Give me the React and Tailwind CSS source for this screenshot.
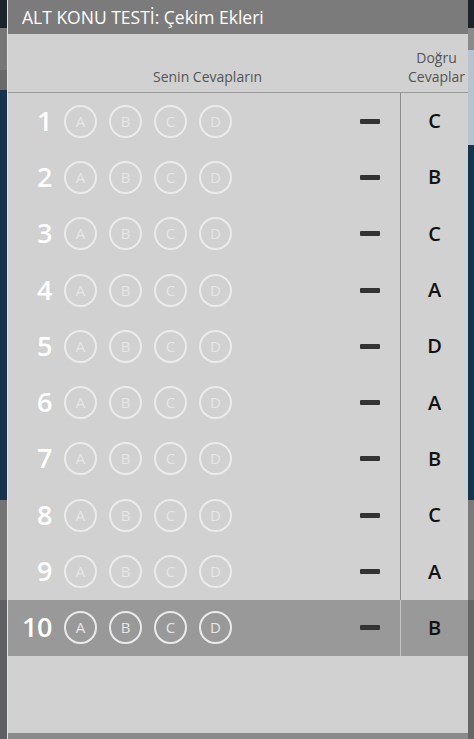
const correct = ["C", "B", "C", "A", "D", "A", "B", "C", "A", "B"];
const options = ["A", "B", "C", "D"];

function Row({ n, answer, active }) {
  return (
    <div className={`flex h-[56.3px] ${active ? "bg-[#999999]" : ""}`}>
      <div className="flex flex-1 items-center">
        <span className="w-[44px] -translate-y-[1px] text-right text-[27px] font-semibold leading-none tracking-[-0.5px] text-white">{n}</span>
        <div className="ml-[12px] flex gap-[12px]">
          {options.map((o) => (
            <span
              key={o}
              className="flex h-[33px] w-[33px] items-center justify-center rounded-full border-2 border-[#ebebeb] text-[15px] leading-none text-[#e6e6e6]"
            >
              {o}
            </span>
          ))}
        </div>
        <span className="ml-auto mr-[20px] h-[5px] w-[20px] rounded-[1px] bg-[#333333]" />
      </div>
      <div className={`w-px ${active ? "bg-[#c4c4c4]" : "bg-[#8c8c8c]"}`} />
      <div className="flex w-[67px] items-center justify-center text-[20px] font-semibold text-[#111111]">
        {answer}
      </div>
    </div>
  );
}

export default function App() {
  return (
    <div className="flex h-[739px] w-[474px] overflow-hidden bg-[#5f6063] font-['Open_Sans',sans-serif]">
      <div className="flex w-[7px] flex-col">
        <div className="h-[28px] bg-[#1d232b]" />
        <div className="h-[42px] bg-[#777777]" />
        <div className="h-[20px] bg-[#6a6a6a]" />
        <div className="h-[410px] bg-[#16344e]" />
        <div className="h-[100px] bg-[#747474]" />
        <div className="flex-1 bg-[#5f6063]" />
      </div>
      <div className="flex w-[461px] flex-col border-l border-[#e2e2e2] bg-[#d1d1d1]">
        <div className="flex h-[34px] items-center bg-[#7b7b7b] px-[14px] text-[17.5px] text-white">
          ALT KONU TESTİ: Çekim Ekleri
        </div>
        <div className="flex h-[59px] items-end border-b border-[#9a9a9a] pb-[6px] text-[14px] leading-[19px] text-[#555555]">
          <div className="flex-1 pl-[6px] text-center">Senin Cevapların</div>
          <div className="w-[67px] pl-[4px] text-center">
            Doğru
            <br />
            Cevaplar
          </div>
        </div>
        {correct.map((c, i) => (
          <Row key={i} n={i + 1} answer={c} active={i === 9} />
        ))}
        <div className="flex-1" />
        <div className="h-[6px] bg-[#8a8a8a]" />
      </div>
      <div className="flex w-[6px] flex-col">
        <div className="h-[28px] bg-[#1d232b]" />
        <div className="h-[22px] bg-[#8a8a8a]" />
        <div className="h-[95px] bg-[#b7c3cf]" />
        <div className="h-[355px] bg-[#16344e]" />
        <div className="h-[100px] bg-[#7a7a7a]" />
        <div className="flex-1 bg-[#666666]" />
      </div>
    </div>
  );
}
